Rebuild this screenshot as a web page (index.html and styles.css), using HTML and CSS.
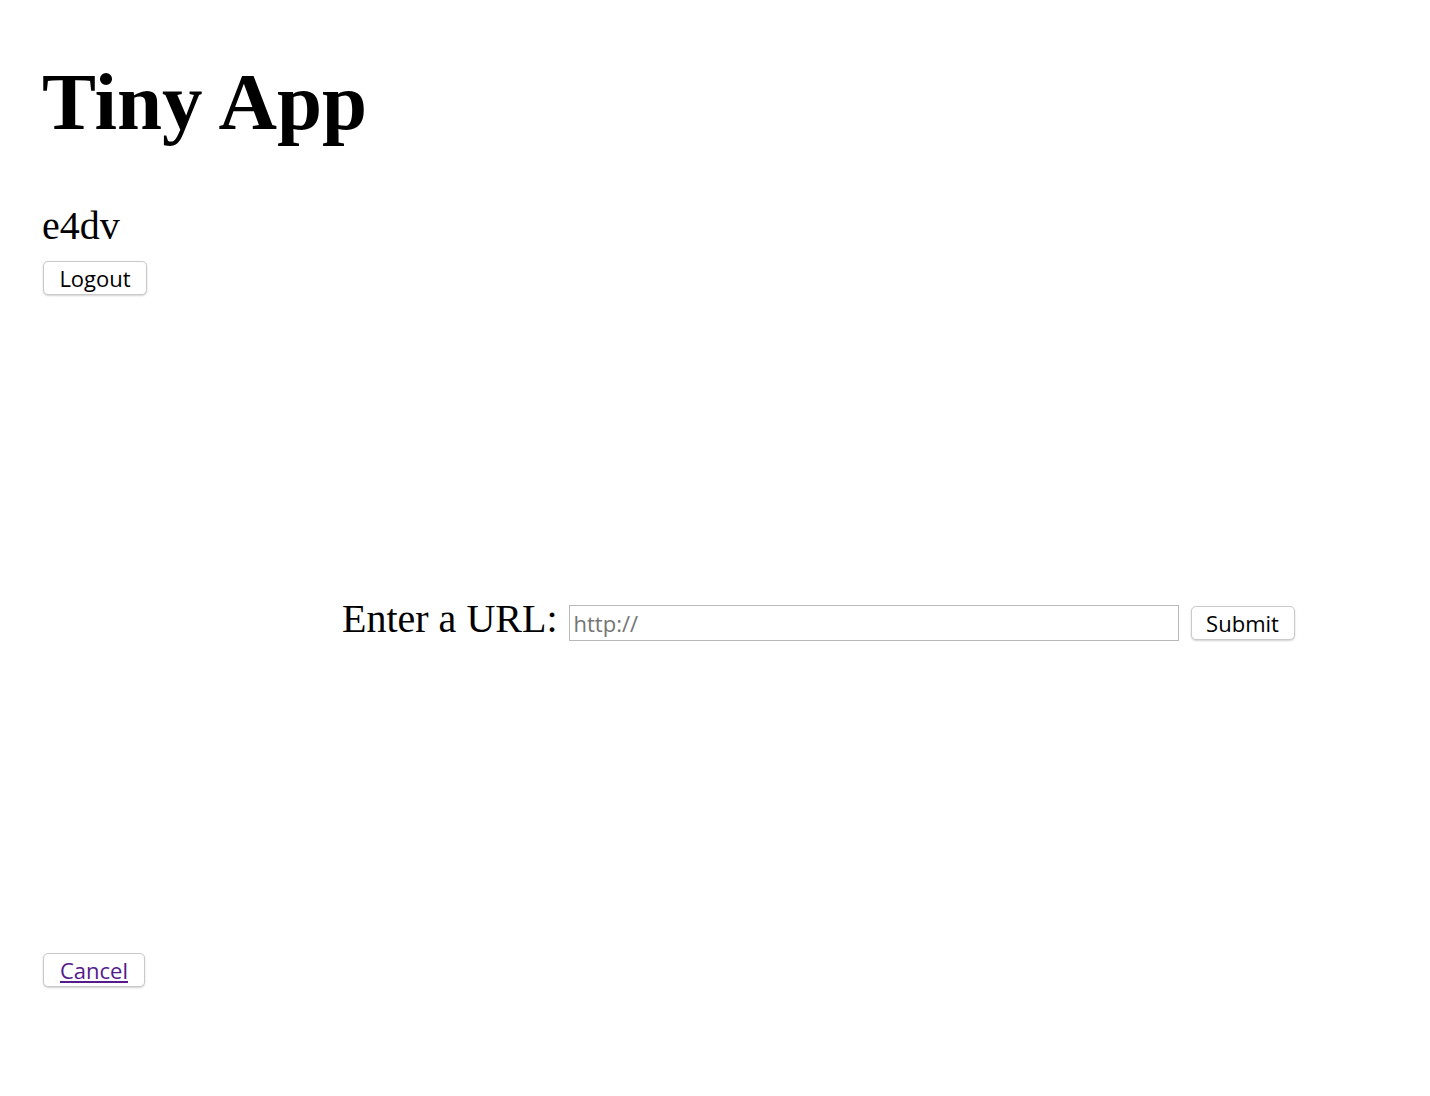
FILE: index.html
```html
<!DOCTYPE html>
<html lang="en">
<head>
    <meta charset="UTF-8">
    <meta name="viewport" content="width=device-width, initial-scale=1.0">
    <title>Tiny App</title>
    <link rel="stylesheet" href="styles.css">
</head>
<body>
    <div id="page">
        <h1 class="title">Tiny App</h1>

        <!-- current user -->
        <div class="user">
            <p class="username">e4dv</p>
            <form class="logout-form">
                <button type="button" class="button">Logout</button>
            </form>
        </div>

        <!-- new url form -->
        <form class="url-form">
            <label for="longURL" class="url-label">Enter a URL:</label>
            <input type="text" id="longURL" name="longURL" class="url-input" placeholder="http://">
            <button type="button" class="button">Submit</button>
        </form>

        <button type="button" class="button cancel"><a href="#">Cancel</a></button>
    </div>
</body>
</html>
```

FILE: styles.css
```css
body {
    margin: 0;
    padding: 0;
    background: #fff;
    color: #000;
    font-family: "Liberation Serif", "Times New Roman", serif;
}
#page {
    padding: 20px 42px;
}
.title {
    margin: 42px 0 0;
    font-size: 81px;
    line-height: 1;
    font-weight: bold;
}
.username {
    margin: 63px 0 0;
    font-size: 40px;
    line-height: 1;
}
.logout-form {
    margin-top: 15px;
}
.button {
    display: block;
    height: 34px;
    padding: 0 10px;
    background: #fff;
    color: #000;
    border: 1px solid #c9c9c9;
    border-radius: 5px;
    box-shadow: 0 1px 2px rgba(0, 0, 0, 0.18);
    font-family: "Open Sans", "Liberation Sans", sans-serif;
    font-size: 22px;
    line-height: 32px;
    cursor: pointer;
}
.logout-form .button {
    margin-left: 1px;
    width: 104px;
}
.url-form {
    display: flex;
    align-items: baseline;
    margin-top: 304px;
    padding-left: 300px;
}
.url-label {
    font-size: 40px;
    line-height: 1;
    margin-right: 11px;
}
.url-input {
    width: 610px;
    height: 36px;
    box-sizing: border-box;
    padding: 0 4px;
    border: 1px solid #b9b9b9;
    font-family: "Open Sans", "Liberation Sans", sans-serif;
    font-size: 22px;
}
.url-input::placeholder {
    color: #757575;
}
.url-form .button {
    margin-left: 12px;
    width: 104px;
}
.cancel {
    margin-top: 312px;
    margin-left: 1px;
    width: 102px;
}
.cancel a {
    color: #551a8b;
    text-decoration: underline;
}
```
